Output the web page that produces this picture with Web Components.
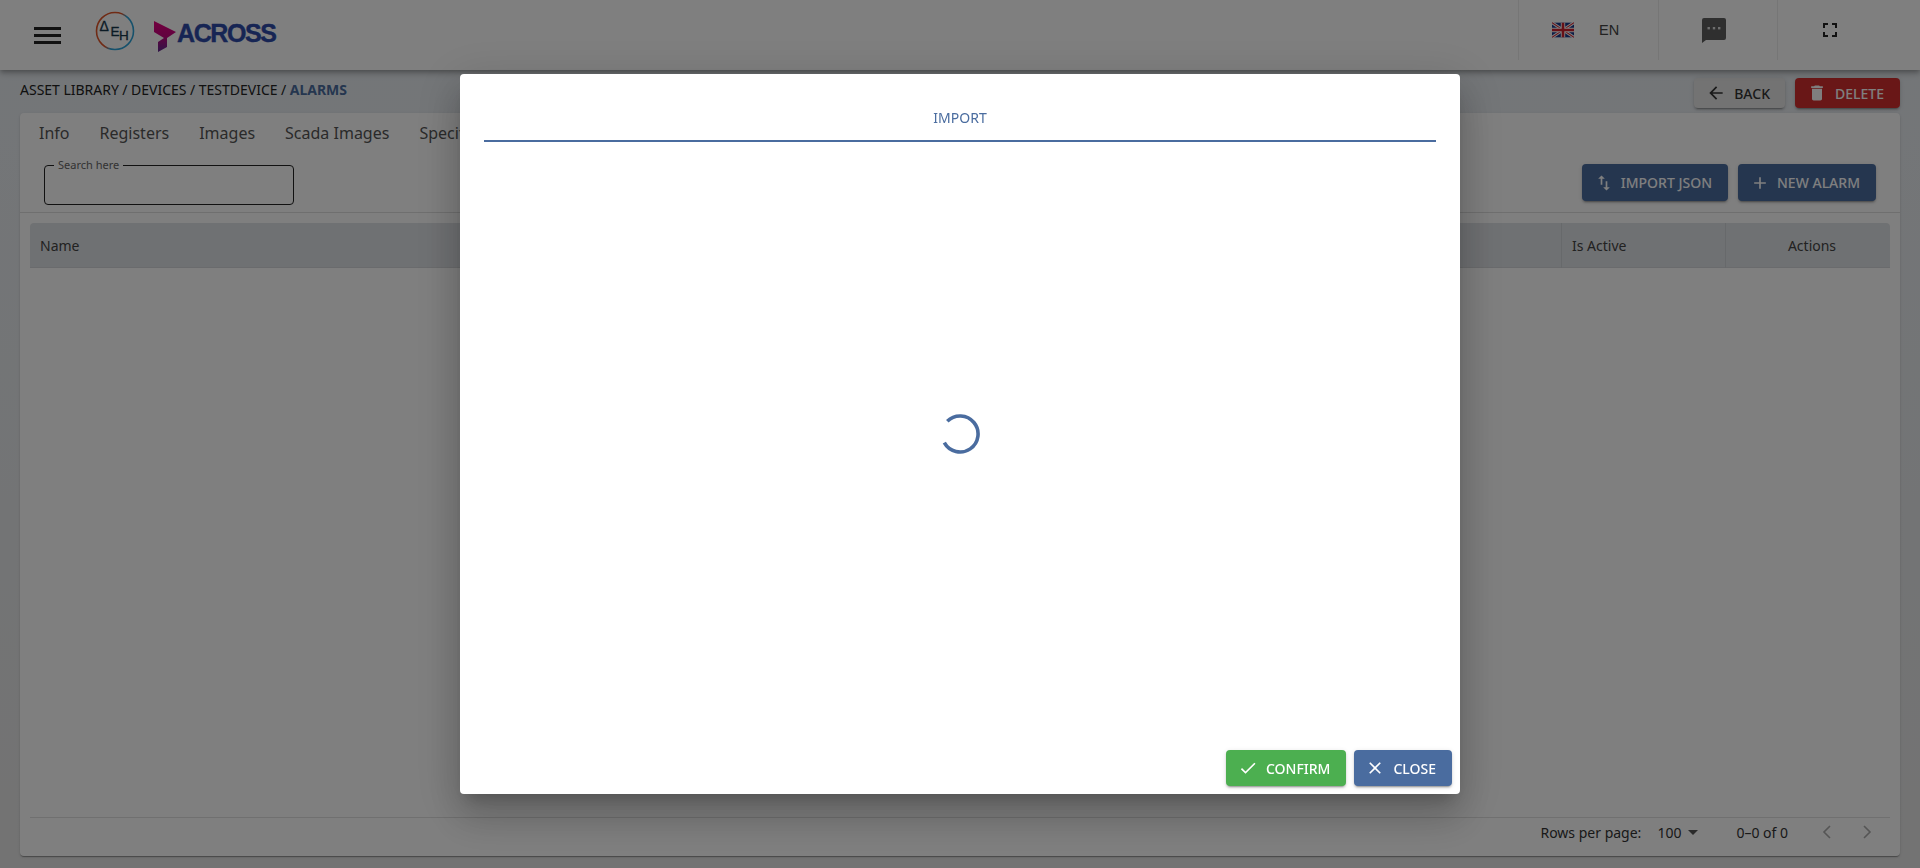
<!DOCTYPE html>
<html>
<head>
<meta charset="utf-8">
<title>Alarms</title>
<style>
  html, body { margin: 0; height: 100%; }
  body { background: linear-gradient(#e8edf2, #e6e6e6); font-family: "Noto Sans", sans-serif; overflow: hidden; }
  app-page { height: 868px; }
</style>
</head>
<body>
<app-page>
  <app-header slot="header"></app-header>
  <app-toolbar slot="toolbar"></app-toolbar>
  <alarm-card></alarm-card>
</app-page>
<import-dialog></import-dialog>

<script>
const ICONS = {
  back: '<path d="M20 11H7.83l5.59-5.59L12 4l-8 8 8 8 1.41-1.41L7.83 13H20z"/>',
  trash: '<path d="M6 19c0 1.1.9 2 2 2h8c1.1 0 2-.9 2-2V7H6zM19 4h-3.5l-1-1h-5l-1 1H5v2h14z"/>',
  swap: '<path d="M16 17.01V10h-2v7.01h-3L15 21l4-3.99zM9 3 5 6.99h3V14h2V6.99h3z"/>',
  plus: '<path d="M19 13h-6v6h-2v-6H5v-2h6V5h2v6h6z"/>',
  check: '<path d="M9 16.17 4.83 12l-1.42 1.41L9 19 21 7l-1.41-1.41z"/>',
  close: '<path d="M19 6.41 17.59 5 12 10.59 6.41 5 5 6.41 10.59 12 5 17.59 6.41 19 12 13.41 17.59 19 19 17.59 13.41 12z"/>',
};

class AppPage extends HTMLElement {
  constructor() {
    super();
    this.attachShadow({ mode: "open" });
    this.shadowRoot.innerHTML = `
      <style>
        :host { display: flex; flex-direction: column; }
        main { flex: 1; min-height: 0; display: flex; flex-direction: column; padding: 8px 20px 12px; }
      </style>
      <slot name="header"></slot>
      <main>
        <slot name="toolbar"></slot>
        <slot></slot>
      </main>`;
  }
}

class AppHeader extends HTMLElement {
  constructor() {
    super();
    this.attachShadow({ mode: "open" });
    this.shadowRoot.innerHTML = `
      <style>
        :host { display: flex; align-items: stretch; height: 70px; background: #fff; position: relative; z-index: 1;
          box-shadow: 0 2px 4px -1px rgba(0,0,0,.2), 0 4px 5px rgba(0,0,0,.14), 0 1px 10px rgba(0,0,0,.12); }
        .burger { margin: 27px 0 0 34px; width: 27px; height: 17px; display: flex; flex-direction: column; justify-content: space-between; }
        .burger i { display: block; height: 3px; background: #222; }
        .deh { margin: 11px 0 0 34px; width: 40px; height: 40px; }
        .across { margin: 21px 0 0 19px; display: flex; height: 31px; }
        .across span { font: 700 25px/26px "Liberation Sans", sans-serif; letter-spacing: -1.4px; color: #2e4aa8; margin: -1px 0 0 0; -webkit-text-stroke: .4px #2e4aa8; }
        .right { margin-left: auto; display: flex; height: 60px; }
        .cell { display: flex; align-items: center; border-left: 1px solid #ececec; box-sizing: border-box; }
        .lang { width: 140px; padding-left: 33px; }
        .lang b { font: 400 14.5px "Liberation Sans", sans-serif; color: #444; margin-left: 25px; }
        .chat { width: 119px; padding-left: 43px; }
        .full { width: 143px; padding-left: 45px; }
      </style>
      <div class="burger"><i></i><i></i><i></i></div>
      <svg class="deh" viewBox="0 0 40 40">
        <defs><linearGradient id="ring" x1="0" y1=".25" x2="1" y2=".75">
          <stop offset=".45" stop-color="#e0562a"/><stop offset=".6" stop-color="#2da3d8"/>
        </linearGradient></defs>
        <circle cx="20" cy="20" r="18.5" fill="#fff" stroke="url(#ring)" stroke-width="1.6"/>
        <text x="4.5" y="20" font-family="Liberation Sans" font-size="14" fill="#16364a" stroke="#16364a" stroke-width=".3">Δ</text>
        <text x="15.5" y="25" font-family="Liberation Sans" font-size="13.5" fill="#16364a" stroke="#16364a" stroke-width=".3">Ε</text>
        <text x="24" y="29" font-family="Liberation Sans" font-size="13.5" fill="#16364a" stroke="#16364a" stroke-width=".3">Η</text>
      </svg>
      <div class="across">
        <svg width="23" height="31" viewBox="0 0 23 31">
          <defs><linearGradient id="arr" x1="0" y1="0" x2="0" y2="1">
            <stop offset="0" stop-color="#e6007e"/><stop offset=".5" stop-color="#c4057f"/><stop offset="1" stop-color="#5e2b8f"/>
          </linearGradient></defs>
          <path d="M0 0 22 11 13 17V26L4 31V21L10 17 0 11Z" fill="url(#arr)"/>
        </svg>
        <span>ACROSS</span>
      </div>
      <div class="right">
        <div class="cell lang">
          <svg width="22" height="16" viewBox="0 0 60 40">
            <rect width="60" height="40" fill="#1a3a8c"/>
            <path d="M0 0 60 40M60 0 0 40" stroke="#fff" stroke-width="8"/>
            <path d="M0 0 60 40M60 0 0 40" stroke="#d0202e" stroke-width="3"/>
            <path d="M30 0V40M0 20H60" stroke="#fff" stroke-width="12"/>
            <path d="M30 0V40M0 20H60" stroke="#d0202e" stroke-width="7"/>
          </svg>
          <b>EN</b>
        </div>
        <div class="cell chat">
          <svg width="24" height="25" viewBox="0 0 24 25" fill="#5e5e5e">
            <path d="M2 0H22a2 2 0 0 1 2 2V20a2 2 0 0 1-2 2H4L0 25V2A2 2 0 0 1 2 0Z"/>
            <rect x="5.5" y="9" width="2.4" height="2.4" fill="#ddd"/><rect x="10.8" y="9" width="2.4" height="2.4" fill="#ddd"/><rect x="16" y="9" width="2.4" height="2.4" fill="#ddd"/>
          </svg>
        </div>
        <div class="cell full">
          <svg width="14" height="14" viewBox="0 0 14 14" fill="none" stroke="#222" stroke-width="2">
            <path d="M1 5V1H5M9 1H13V5M13 9V13H9M5 13H1V9"/>
          </svg>
        </div>
      </div>`;
  }
}

class UiButton extends HTMLElement {
  constructor() {
    super();
    this.attachShadow({ mode: "open" });
  }
  connectedCallback() {
    const icon = ICONS[this.getAttribute("icon")] || "";
    this.shadowRoot.innerHTML = `
      <style>
        :host { display: inline-flex; align-items: center; box-sizing: border-box; border-radius: 4px;
          height: var(--h, 36px); padding: 0 var(--pr, 16px) 0 var(--pl, 12px); gap: var(--gap, 8px);
          background: var(--bg, #4a6c9f); color: var(--fg, #fff);
          font: 500 14px "Noto Sans", sans-serif; white-space: nowrap;
          box-shadow: 0 3px 1px -2px rgba(0,0,0,.2), 0 2px 2px rgba(0,0,0,.14), 0 1px 5px rgba(0,0,0,.12); }
        svg { width: 20px; height: 20px; fill: currentColor; flex: none; }
      </style>
      <svg viewBox="0 0 24 24">${icon}</svg><slot></slot>`;
  }
}

class AppToolbar extends HTMLElement {
  constructor() {
    super();
    this.attachShadow({ mode: "open" });
    this.shadowRoot.innerHTML = `
      <style>
        :host { display: flex; justify-content: space-between; height: 35px; }
        .crumbs { font-size: 14px; line-height: 24px; color: #222; white-space: nowrap; word-spacing: -.15px; }
        .crumbs b { color: #4a6c9f; font-weight: 700; }
        .btns { display: flex; gap: 10px; }
        ui-button { --h: 30px; --pl: 12px; --pr: 16px; --gap: 8px; }
        .back { --bg: #e6e6e6; --fg: #333; --pr: 15px; }
        .del { --bg: #d32f2f; --fg: #fff; }
      </style>
      <div class="crumbs">ASSET LIBRARY / DEVICES / TESTDEVICE / <b>ALARMS</b></div>
      <div class="btns">
        <ui-button class="back" icon="back">BACK</ui-button>
        <ui-button class="del" icon="trash">DELETE</ui-button>
      </div>`;
  }
}

class AlarmCard extends HTMLElement {
  constructor() {
    super();
    this.attachShadow({ mode: "open" });
    this.shadowRoot.innerHTML = `
      <style>
        :host { display: flex; flex: 1; min-height: 0; flex-direction: column; background: #fff; border-radius: 4px;
          box-shadow: 0 2px 1px -1px rgba(0,0,0,.2), 0 1px 1px rgba(0,0,0,.14), 0 1px 3px rgba(0,0,0,.12); }
        .tabs { display: flex; height: 40px; padding-left: 19px; font-size: 16px; color: #555; align-items: center; white-space: nowrap; overflow: hidden; }
        .tabs span { padding: 0 19px 0 0; margin-right: 11px; }
        .tools { display: flex; justify-content: space-between; align-items: flex-start; height: 60px; padding: 11px 24px 0 24px; box-sizing: border-box; border-bottom: 1px solid #dedede; }
        .search { position: relative; width: 250px; height: 40px; box-sizing: border-box; border: 1px solid #222; border-radius: 4px; margin-top: 1px; }
        .search label { position: absolute; left: 9px; top: -8px; background: #fff; padding: 0 4px; font-size: 11px; line-height: 14px; color: #666; }
        .actions { display: flex; gap: 10px; }
        .actions ui-button { --h: 37px; --bg: #4a6c9f; --fg: #fff; --pl: 12px; --pr: 16px; --gap: 7px; }
        .table { flex: 1; margin: 10px 10px 0; min-height: 0; }
        .head { display: grid; grid-template-columns: 1fr 164px 165px; height: 45px; background: #dfe2e6; border-bottom: 1px solid #d5d7da; border-radius: 4px 4px 0 0; font-size: 14px; line-height: 45px; color: #444; box-sizing: border-box; }
        .head div { padding: 0 10px; }
        .head div + div { border-left: 1px solid #cfd2d6; }
        .head .c { text-align: center; padding-left: 18px; }
        .foot { display: flex; justify-content: flex-end; align-items: center; height: 39px; box-sizing: border-box; padding-bottom: 10px; margin: 0 10px; border-top: 1px solid #e0e0e0; font-size: 14px; color: #333; }
        .foot .n { margin-left: 16px; display: flex; align-items: center; gap: 7px; }
        .foot .range { margin-left: 38px; }
        .foot svg { flex: none; }
      </style>
      <div class="tabs"><span>Info</span><span>Registers</span><span>Images</span><span>Scada Images</span><span>Specifications</span></div>
      <div class="tools">
        <div class="search"><label>Search here</label></div>
        <div class="actions">
          <ui-button icon="swap">IMPORT JSON</ui-button>
          <ui-button icon="plus">NEW ALARM</ui-button>
        </div>
      </div>
      <div class="table">
        <div class="head"><div>Name</div><div>Is Active</div><div class="c">Actions</div></div>
      </div>
      <div class="foot">
        <span>Rows per page:</span>
        <span class="n">100 <svg width="10" height="5" viewBox="0 0 10 5" fill="#555"><path d="M0 0H10L5 5Z"/></svg></span>
        <span class="range">0–0 of 0</span>
        <svg style="margin-left:34px" width="10" height="14" viewBox="0 0 10 14" fill="none" stroke="#aaa" stroke-width="1.6"><path d="M8 1 2 7l6 6"/></svg>
        <svg style="margin:0 18px 0 30px" width="10" height="14" viewBox="0 0 10 14" fill="none" stroke="#aaa" stroke-width="1.6"><path d="M2 1l6 6-6 6"/></svg>
      </div>`;
  }
}

class ImportDialog extends HTMLElement {
  constructor() {
    super();
    this.attachShadow({ mode: "open" });
    this.shadowRoot.innerHTML = `
      <style>
        :host { position: fixed; inset: 0; z-index: 10; display: flex; align-items: center; justify-content: center; background: rgba(0,0,0,.5); }
        .box { width: 1000px; height: 720px; display: flex; flex-direction: column; background: #fff; border-radius: 4px;
          box-shadow: 0 11px 15px -7px rgba(0,0,0,.2), 0 24px 38px 3px rgba(0,0,0,.14), 0 9px 46px 8px rgba(0,0,0,.12); }
        .tab { margin: 20px 24px 0; height: 48px; box-sizing: border-box; border-bottom: 2px solid #4a6c9f; color: #4a6c9f; font-size: 14px; text-align: center; line-height: 47px; }
        .body { flex: 1; display: flex; align-items: center; justify-content: center; padding: 0 0 24px 0; }
        .foot { display: flex; justify-content: flex-end; gap: 8px; padding: 0 8px 8px; }
        .foot ui-button { --pl: 11px; --pr: 16px; --gap: 8px; }
        .foot .ok { --bg: #4caf50; --pl: 12px; }
      </style>
      <div class="box">
        <div class="tab">IMPORT</div>
        <div class="body">
          <svg width="40" height="40" viewBox="0 0 40 40" fill="none" stroke="#4a6c9f" stroke-width="3.6">
            <path d="M7.3 7.3A18 18 0 1 1 4.3 28.7"/>
          </svg>
        </div>
        <div class="foot">
          <ui-button class="ok" icon="check">CONFIRM</ui-button>
          <ui-button icon="close">CLOSE</ui-button>
        </div>
      </div>`;
  }
}

customElements.define("app-page", AppPage);
customElements.define("app-header", AppHeader);
customElements.define("ui-button", UiButton);
customElements.define("app-toolbar", AppToolbar);
customElements.define("alarm-card", AlarmCard);
customElements.define("import-dialog", ImportDialog);
</script>
</body>
</html>
